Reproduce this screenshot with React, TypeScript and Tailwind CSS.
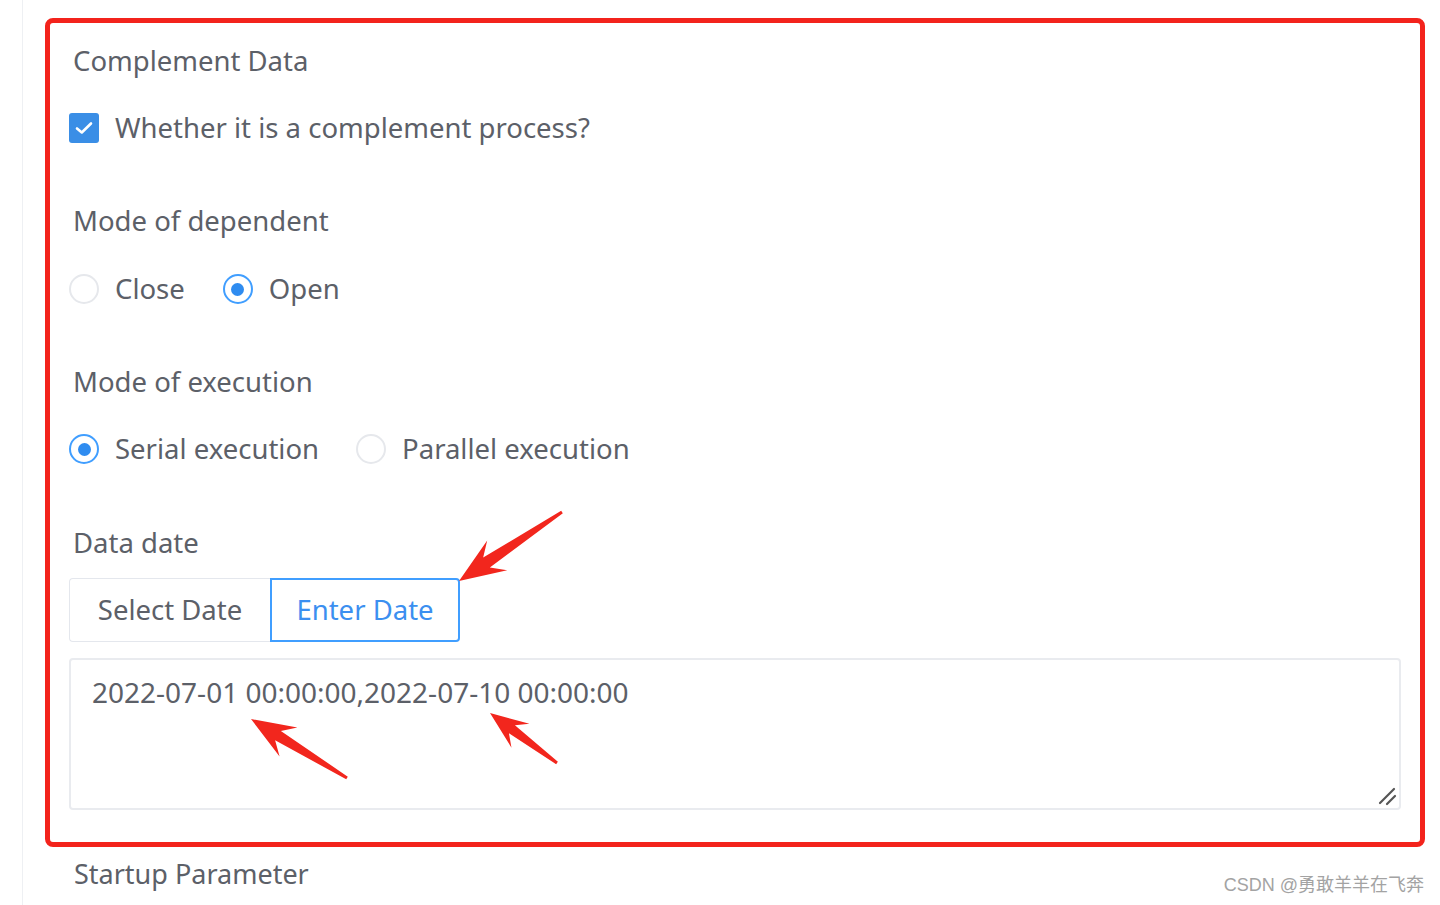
import React from "react";

const font = "font-['Segoe_UI','Noto_Sans','Liberation_Sans',sans-serif]";

type Pt = [number, number];

const arrows: { tip: Pt; tail: Pt; head: number; width: number; shaft: number }[] = [
  { tip: [459, 581], tail: [562, 512], head: 46, width: 36, shaft: 12 },
  { tip: [251, 719], tail: [347, 778], head: 44, width: 34, shaft: 11 },
  { tip: [490, 713], tail: [557, 763], head: 38, width: 30, shaft: 10 },
];

function arrowPoints(a: (typeof arrows)[number]) {
  const [tx, ty] = a.tip;
  const dx = a.tail[0] - tx;
  const dy = a.tail[1] - ty;
  const len = Math.hypot(dx, dy);
  const ux = dx / len;
  const uy = dy / len;
  const nx = -uy;
  const ny = ux;
  const at = (d: number, w: number): string =>
    `${tx + ux * d + nx * w},${ty + uy * d + ny * w}`;
  return [
    at(0, 0),
    at(a.head, a.width / 2),
    at(a.head * 0.72, a.shaft / 2),
    at(len, 1.5),
    at(len, -1.5),
    at(a.head * 0.72, -a.shaft / 2),
    at(a.head, -a.width / 2),
  ].join(" ");
}

function Radio({ checked, label }: { checked?: boolean; label: string }) {
  return (
    <div className="flex items-center gap-4">
      {checked ? (
        <span className="flex size-[30px] items-center justify-center rounded-full border-2 border-[#409eff] bg-white">
          <span className="size-[13px] rounded-full bg-[#2f8cf0]" />
        </span>
      ) : (
        <span className="size-[30px] rounded-full border-2 border-[#e6e8ec] bg-white" />
      )}
      <span className="text-[27.5px] text-[#5c6068]">{label}</span>
    </div>
  );
}

function Label({ children, className = "" }: { children: React.ReactNode; className?: string }) {
  return (
    <div className={`flex h-[40px] items-center pl-[23px] text-[27.5px] text-[#5c6068] ${className}`}>
      {children}
    </div>
  );
}

export default function App() {
  return (
    <div className={`relative flex h-[905px] w-[1440px] overflow-hidden bg-white ${font}`}>
      <div className="ml-[22px] flex h-full flex-col border-l border-[#eef0f3]">
        <div className="ml-[22px] mt-[18px] flex h-[829px] w-[1380px] flex-col rounded-[8px] border-[5px] border-[#f3231c]">
          <Label className="mt-[18px]">Complement Data</Label>

          <div className="mt-[27px] flex h-[40px] items-center gap-4 pl-[19px]">
            <span className="flex size-[30px] items-center justify-center rounded-[3px] bg-[#3a8ee6]">
              <svg width="18" height="14" viewBox="0 0 18 14" fill="none">
                <path d="M2 7.5 L6.8 11.5 L16 2.5" stroke="white" strokeWidth="2.6" strokeLinecap="round" strokeLinejoin="round" />
              </svg>
            </span>
            <span className="text-[27.5px] text-[#5c6068]">Whether it is a complement process?</span>
          </div>

          <Label className="mt-[53px]">Mode of dependent</Label>
          <div className="mt-[28px] flex h-[40px] items-center gap-[38px] pl-[19px]">
            <Radio label="Close" />
            <Radio checked label="Open" />
          </div>

          <Label className="mt-[53px]">Mode of execution</Label>
          <div className="mt-[27px] flex h-[40px] items-center gap-[37px] pl-[19px]">
            <Radio checked label="Serial execution" />
            <Radio label="Parallel execution" />
          </div>

          <Label className="mt-[54px]">Data date</Label>
          <div className="ml-[19px] mt-[15px] flex h-[64px]">
            <div className="flex w-[201px] items-center justify-center rounded-l-[4px] border border-r-0 border-[#e4e7ed] text-[27.5px] text-[#5c6068]">
              Select Date
            </div>
            <div className="flex w-[190px] items-center justify-center rounded-r-[4px] border-2 border-[#409eff] text-[27.5px] text-[#3b8ff0]">
              Enter Date
            </div>
          </div>

          <div className="relative mx-[19px] mt-[16px] h-[152px] rounded-[4px] border-2 border-[#e9ebef] px-[21px] pt-[11px] text-[28px] text-[#5c6068]">
            2022-07-01 00:00:00,2022-07-10 00:00:00
            <svg className="absolute bottom-[2px] right-[2px]" width="20" height="20" viewBox="0 0 20 20">
              <path d="M3 17 L17 3 M10 18 L18 10" stroke="#555" strokeWidth="2.2" strokeLinecap="round" />
            </svg>
          </div>
        </div>

        <Label className="ml-[28px] mt-[7px] pl-0 text-[27px]">Startup Parameter</Label>
      </div>

      <div className="absolute bottom-[6px] right-[16px] font-['Liberation_Sans','Noto_Sans_CJK_SC',sans-serif] text-[18px] text-[#a3a3a3]">
        CSDN @勇敢羊羊在飞奔
      </div>

      <svg className="pointer-events-none absolute left-0 top-0" width="1440" height="905">
        {arrows.map((a, i) => (
          <polygon key={i} points={arrowPoints(a)} fill="#f2261d" />
        ))}
      </svg>
    </div>
  );
}
